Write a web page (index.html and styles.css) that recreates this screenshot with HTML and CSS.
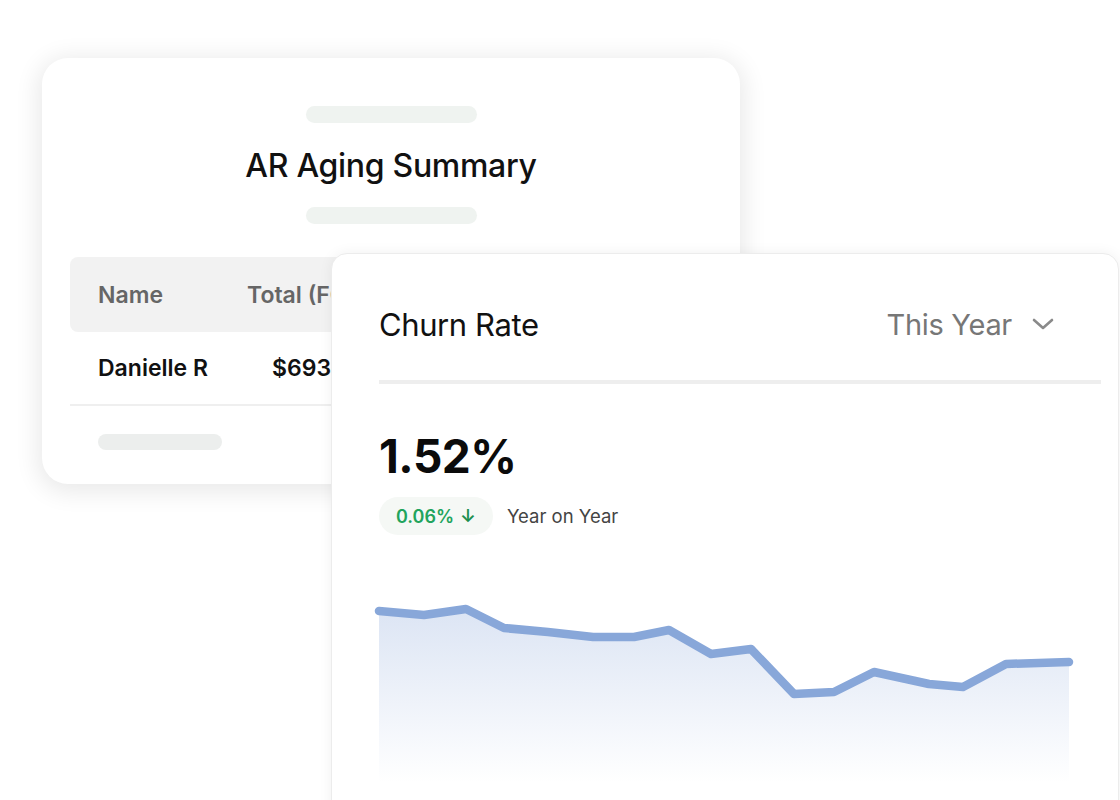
FILE: index.html
```html
<!DOCTYPE html>
<html lang="en">
<head>
    <meta charset="UTF-8">
    <meta name="viewport" content="width=device-width, initial-scale=1.0">
    <title>AR Aging Summary / Churn Rate</title>
    <link rel="stylesheet" href="styles.css">
</head>
<body>

    <div class="stage">
        <div class="aging-card">
            <div class="skeleton skeleton-top"></div>
            <h2>AR Aging Summary</h2>
            <div class="skeleton skeleton-mid"></div>

            <div class="aging-table">
                <div class="table-head">
                    <span class="col-name">Name</span>
                    <span class="col-total">Total (FCY)</span>
                </div>
                <div class="table-row">
                    <span class="col-name">Danielle R</span>
                    <span class="col-total">$693.00</span>
                </div>
            </div>
            <div class="skeleton skeleton-bottom"></div>
        </div>

        <div class="churn-card">
            <div class="churn-head">
                <span class="churn-title">Churn Rate</span>
                <span class="period">
                    This Year
                    <svg class="chevron" width="22" height="14" viewBox="0 0 22 14">
                        <path d="M2 3 L11 11 L20 3" fill="none" stroke="#8a8a8a" stroke-width="2.6" stroke-linecap="round" stroke-linejoin="round"/>
                    </svg>
                </span>
            </div>
            <div class="divider"></div>

            <div class="churn-value">1.52%</div>
            <div class="churn-change">
                <span class="badge">0.06% <span class="arrow">&#8595;</span></span>
                <span class="change-label">Year on Year</span>
            </div>

            <svg class="chart" width="720" height="200" viewBox="0 0 720 200">
                <defs>
                    <linearGradient id="area" x1="0" y1="0" x2="0" y2="1">
                        <stop offset="0" stop-color="#8aa7da" stop-opacity="0.3"/>
                        <stop offset="1" stop-color="#8aa7da" stop-opacity="0"/>
                    </linearGradient>
                </defs>
                <path d="M8 20 L53 24 L95 18 L133 37 L177 41 L222 46 L263 46 L298 39 L340 63 L380 58 L423 103 L463 101 L503 81 L558 93 L592 96 L635 73 L698 71 L698 192 L8 192 Z" fill="url(#area)"/>
                <path d="M8 20 L53 24 L95 18 L133 37 L177 41 L222 46 L263 46 L298 39 L340 63 L380 58 L423 103 L463 101 L503 81 L558 93 L592 96 L635 73 L698 71" fill="none" stroke="#88a7d9" stroke-width="8.5" stroke-linecap="round" stroke-linejoin="round"/>
            </svg>
        </div>
    </div>

</body>
</html>
```

FILE: styles.css
```css
body {
    margin: 0;
    font-family: Inter, "Open Sans", sans-serif;
    background-color: #fff;
    overflow: hidden;
}
.stage {
    position: relative;
    width: 1120px;
    height: 800px;
    padding: 58px 0 0 42px;
    box-sizing: border-box;
    overflow: hidden;
}

/* AR Aging card */
.aging-card {
    width: 698px;
    height: 426px;
    box-sizing: border-box;
    padding: 48px 28px 0;
    background-color: #fff;
    border-radius: 26px;
    box-shadow: 0 4px 24px 4px rgba(0, 0, 0, 0.09);
    display: flex;
    flex-direction: column;
    align-items: center;
}
.skeleton {
    height: 17px;
    border-radius: 9px;
    background-color: #eff3f0;
}
.skeleton-top,
.skeleton-mid {
    width: 171px;
}
.aging-card h2 {
    margin: 24px 0 0;
    height: 60px;
    font-size: 32px;
    line-height: 38px;
    font-weight: 500;
    color: #111;
    letter-spacing: -0.3px;
}
.aging-table {
    align-self: stretch;
    margin-top: 33px;
}
.table-head,
.table-row {
    display: flex;
    align-items: center;
    padding-left: 28px;
    font-size: 23px;
}
.table-head {
    height: 75px;
    background-color: #f2f2f2;
    border-radius: 8px;
    color: #666;
    font-weight: 600;
}
.table-row {
    height: 72px;
    border-bottom: 2px solid #efefef;
    color: #111;
    font-weight: 600;
}
.col-name {
    width: 149px;
}
.table-row .col-name {
    width: 174px;
}
.skeleton-bottom {
    align-self: flex-start;
    width: 124px;
    height: 16px;
    margin: 28px 0 0 28px;
    background-color: #eceeed;
}

/* Churn card */
.churn-card {
    position: absolute;
    left: 331px;
    top: 253px;
    width: 788px;
    height: 600px;
    box-sizing: border-box;
    padding: 40px 17px 0 47px;
    background-color: #fff;
    border: 1px solid #ececec;
    border-radius: 16px;
    box-shadow: 0 0 14px rgba(0, 0, 0, 0.06);
}
.churn-head {
    display: flex;
    justify-content: space-between;
    align-items: center;
    height: 60px;
    padding-right: 47px;
}
.churn-title {
    font-size: 31px;
    color: #111;
    letter-spacing: -0.4px;
}
.period {
    display: flex;
    align-items: center;
    gap: 20px;
    font-size: 29px;
    color: #777;
    letter-spacing: -0.3px;
}
.divider {
    height: 4px;
    margin-top: 26px;
    background-color: #eeeeee;
}
.churn-value {
    margin-top: 44px;
    font-size: 46px;
    font-weight: 700;
    color: #0b0b0b;
    letter-spacing: -0.5px;
    line-height: 56px;
}
.churn-change {
    display: flex;
    align-items: center;
    gap: 14px;
    margin-top: 13px;
}
.badge {
    height: 38px;
    padding: 0 17px;
    display: flex;
    align-items: center;
    gap: 6px;
    border-radius: 19px;
    background-color: #f5f8f5;
    color: #22a45d;
    font-size: 18px;
    font-weight: 600;
}
.arrow {
    font-size: 18px;
    color: #1c8f4f;
}
.change-label {
    font-size: 18.5px;
    color: #444;
}
.chart {
    display: block;
    margin: 56px 0 0 -8px;
}
```
